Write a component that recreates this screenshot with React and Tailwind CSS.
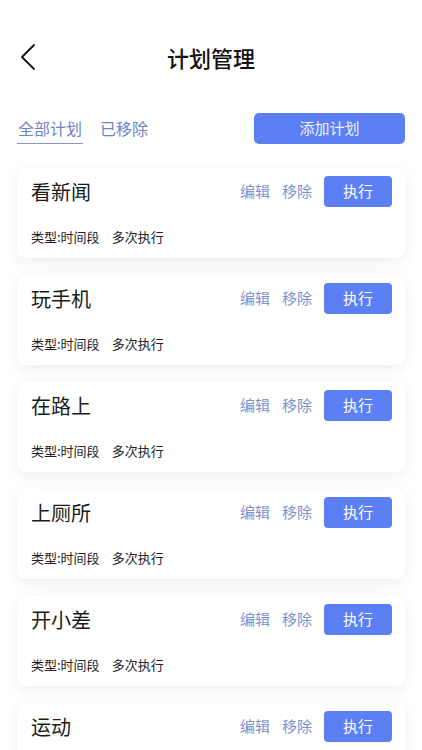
import React from "react";

const items = ["看新闻", "玩手机", "在路上", "上厕所", "开小差", "运动"];

export default function App() {
  return (
    <div
      className="w-[422px] h-[750px] overflow-hidden bg-white"
      style={{ fontFamily: '"Noto Sans CJK SC", "Noto Sans", sans-serif' }}
    >
      <div className="mt-[37px] h-[40px] flex items-center">
        <div className="w-[60px] pl-[20px] flex items-center">
          <svg width="16" height="28" viewBox="0 0 16 28" fill="none">
            <path d="M14 2 L2 14 L14 26" stroke="#111" strokeWidth="1.8" strokeLinecap="round" strokeLinejoin="round" />
          </svg>
        </div>
        <div className="flex-1 text-center text-[22px] font-medium text-[#111] leading-none">计划管理</div>
        <div className="w-[60px]" />
      </div>

      <div className="mt-[36px] px-[17px] flex items-start justify-between h-[31px]">
        <div className="flex items-start gap-[17px] text-[16px] text-[#6f86c6] leading-[30px]">
          <div className="border-b-[1.5px] border-[#8595c4] px-[1px]">全部计划</div>
          <div>已移除</div>
        </div>
        <div className="w-[151px] h-[31px] rounded-[5px] bg-[#5c80f4] text-[15px] text-[#eef1ff] flex items-center justify-center">
          添加计划
        </div>
      </div>

      <div className="mt-[24px] px-[17px] flex flex-col gap-[17px]">
        {items.map((t) => (
          <div
            key={t}
            className="h-[90px] shrink-0 rounded-[9px] bg-white shadow-[0_4px_16px_rgba(0,0,0,0.07)] pt-[8px] pl-[14px] pr-[13px]"
          >
            <div className="flex items-center justify-between h-[31px]">
              <div className="text-[20px] text-[#1a1a1a] leading-none">{t}</div>
              <div className="flex items-center gap-[12px]">
                <span className="text-[15px] text-[#7b90d2]">编辑</span>
                <span className="text-[15px] text-[#7b90d2]">移除</span>
                <div className="w-[68px] h-[31px] rounded-[4px] bg-[#5c80f4] text-white text-[15px] flex items-center justify-center">
                  执行
                </div>
              </div>
            </div>
            <div className="mt-[21px] flex items-center gap-[12px] text-[13px] text-[#222] leading-[18px]">
              <span>类型:时间段</span>
              <span>多次执行</span>
            </div>
          </div>
        ))}
      </div>
    </div>
  );
}
